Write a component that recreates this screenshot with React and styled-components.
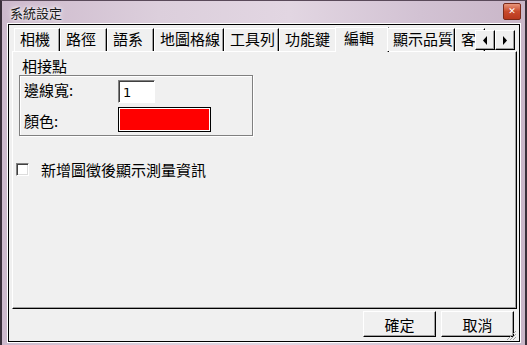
import styled, { createGlobalStyle } from "styled-components";

const Global = createGlobalStyle`
  html, body { margin: 0; padding: 0; }
  body {
    width: 527px;
    height: 345px;
    overflow: hidden;
    font-family: "Noto Sans CJK TC", "Noto Sans CJK SC", sans-serif;
  }
`;

const Frame = styled.div`
  box-sizing: border-box;
  width: 527px;
  height: 345px;
  display: flex;
  flex-direction: column;
  padding: 0 5px 3px 6px;
  background: linear-gradient(90deg, #cdb9cc 0%, #dccfdc 30%, #e2d6e2 55%, #d2c2d3 80%, #c9b6c8 100%);
  border-left: 2px solid #3a2f3a;
  border-right: 2px solid #3a2f3a;
  border-top: 1px solid #5a4a5a;
`;

const TitleBar = styled.div`
  height: 23px;
  display: flex;
  align-items: center;
  justify-content: space-between;
  padding-left: 2px;
  font-size: 13px;
  color: #1a1a1a;
  text-shadow: 0 0 6px #fff, 0 0 3px #fff;
`;

const CloseBtn = styled.div`
  width: 16px;
  height: 15px;
  margin-right: -1px;
  margin-top: -3px;
  border: 1px solid #7a2a1a;
  border-radius: 2px;
  background: linear-gradient(#e8967c, #c84a2c 50%, #b8381e);
  display: flex;
  align-items: center;
  justify-content: center;
  color: #fff;
  font-size: 9px;
  font-weight: bold;
  font-family: "DejaVu Sans", sans-serif;
  text-shadow: none;
`;

const Client = styled.div`
  flex: 1;
  display: flex;
  flex-direction: column;
  background: #f0f0f0;
  border: 1px solid #000;
  outline: 1px solid #fff;
  padding: 2px 2px 0 3px;
`;

const TabRow = styled.div`
  display: flex;
  align-items: flex-end;
  height: 24px;
  padding-left: 2px;
  position: relative;
  z-index: 1;
`;

const Tab = styled.div`
  box-sizing: border-box;
  height: ${(p) => (p.$active ? "25px" : "23px")};
  padding: 0 ${(p) => (p.$active ? "8px" : "5px")};
  margin: ${(p) => (p.$active ? "0 -2px -1px -2px" : "0")};
  background: #f0f0f0;
  border-top: 1px solid #fff;
  border-left: 1px solid #fff;
  border-right: 1px solid #000;
  box-shadow: inset -1px 0 #a0a0a0;
  font-size: 15px;
  line-height: 20px;
  color: #000;
  white-space: nowrap;
  overflow: hidden;
  width: ${(p) => p.$w}px;
  flex: none;
`;

const Arrows = styled.div`
  position: absolute;
  right: 2px;
  top: 3px;
  display: flex;
`;

const ArrowBtn = styled.div`
  box-sizing: border-box;
  width: 20px;
  height: 20px;
  background: #f0f0f0;
  border: 1px solid;
  border-color: #fff #000 #000 #fff;
  box-shadow: inset -1px -1px #a0a0a0;
  display: flex;
  align-items: center;
  justify-content: center;
`;

const Page = styled.div`
  box-sizing: border-box;
  height: 258px;
  border: 1px solid;
  border-color: #fff #000 #000 #fff;
  box-shadow: inset -1px -1px #a0a0a0;
  padding: 4px 0 0 6px;
  font-size: 15px;
  color: #000;
`;

const GroupTitle = styled.div`
  line-height: 18px;
  padding-left: 3px;
  margin-top: 1px;
`;

const Group = styled.div`
  box-sizing: border-box;
  width: 234px;
  height: 61px;
  border: 1px solid #808080;
  box-shadow: 1px 1px #fff, inset 1px 1px #fff;
  display: grid;
  grid-template-columns: 96px auto;
  grid-template-rows: 27px 26px;
  padding: 5px 0 0 4px;
  align-items: start;
`;

const Label = styled.div`
  line-height: 18px;
  margin-top: ${(p) => p.$mt || 0}px;
`;

const Input = styled.div`
  box-sizing: border-box;
  width: 37px;
  height: 23px;
  background: #fff;
  border: 1px solid;
  border-color: #808080 #fff #fff #808080;
  box-shadow: inset 1px 1px #404040;
  font-size: 13px;
  font-family: "DejaVu Sans", sans-serif;
  padding: 4px 0 0 4px;
  margin-top: -1px;
  margin-left: -2px;
`;

const Swatch = styled.div`
  box-sizing: border-box;
  width: 93px;
  height: 25px;
  background: #ff0000;
  border: 1px solid #000;
  box-shadow: inset 0 0 0 1px #fff;
  margin-top: -1px;
  margin-left: -2px;
`;

const CheckRow = styled.div`
  display: flex;
  align-items: center;
  gap: 12px;
  margin: 23px 0 0 -3px;
`;

const Box = styled.div`
  box-sizing: border-box;
  width: 13px;
  height: 13px;
  background: #fff;
  border: 1px solid;
  border-color: #808080 #fff #fff #808080;
  box-shadow: inset 1px 1px #404040, inset -1px -1px #dcdcdc;
`;

const Footer = styled.div`
  flex: 1;
  display: flex;
  justify-content: flex-end;
  align-items: flex-start;
  gap: 5px;
  padding: 2px 3px 0 0;
  position: relative;
`;

const Button = styled.div`
  box-sizing: border-box;
  width: 73px;
  height: 26px;
  background: #f0f0f0;
  border: 1px solid;
  border-color: #fff #000 #000 #fff;
  box-shadow: inset -1px -1px #a0a0a0;
  font-size: 15px;
  display: flex;
  align-items: center;
  justify-content: center;
  color: #000;
`;

const Grip = styled.svg`
  position: absolute;
  right: 0;
  bottom: 0;
`;

const tabs = [
  ["相機", 46],
  ["路徑", 47],
  ["語系", 47],
  ["地圖格線", 70],
  ["工具列", 55],
  ["功能鍵", 58],
  ["編輯", 54],
  ["顯示品質", 68],
  ["客", 30],
];

export default function App() {
  return (
    <>
      <Global />
      <Frame>
        <TitleBar>
          <span>系統設定</span>
          <CloseBtn>✕</CloseBtn>
        </TitleBar>
        <Client>
          <TabRow>
            {tabs.map(([t, w]) => (
              <Tab key={t} $w={w} $active={t === "編輯"}>
                {t}
              </Tab>
            ))}
            <Arrows>
              <ArrowBtn>
                <svg width="6" height="9" viewBox="0 0 6 9">
                  <path d="M5 0 L1 4.5 L5 9 Z" fill="#000" />
                </svg>
              </ArrowBtn>
              <ArrowBtn>
                <svg width="6" height="9" viewBox="0 0 6 9">
                  <path d="M1 0 L5 4.5 L1 9 Z" fill="#000" />
                </svg>
              </ArrowBtn>
            </Arrows>
          </TabRow>
          <Page>
            <GroupTitle>相接點</GroupTitle>
            <Group>
              <Label>邊線寬:</Label>
              <Input>1</Input>
              <Label $mt={4}>顏色:</Label>
              <Swatch />
            </Group>
            <CheckRow>
              <Box />
              <span>新增圖徵後顯示測量資訊</span>
            </CheckRow>
          </Page>
          <Footer>
            <Button>確定</Button>
            <Button>取消</Button>
            <Grip width="12" height="12" viewBox="0 0 12 12">
              <path d="M11 2 L2 11 M11 5 L5 11 M11 8 L8 11" stroke="#a0a0a0" strokeWidth="1" />
            </Grip>
          </Footer>
        </Client>
      </Frame>
    </>
  );
}
